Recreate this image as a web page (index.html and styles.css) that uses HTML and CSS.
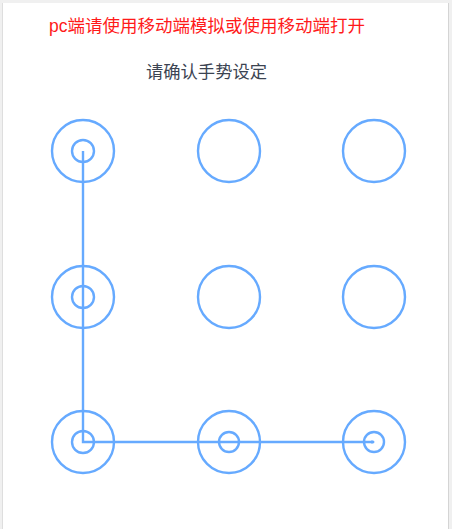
FILE: index.html
```html
<!DOCTYPE html>
<html lang="zh-CN">
<head>
<meta charset="utf-8">
<title>手势密码</title>
<link rel="stylesheet" href="styles.css">
</head>
<body>
<div class="panel">
  <div class="notice">pc端请使用移动端模拟或使用移动端打开</div>
  <div class="title">请确认手势设定</div>
  <svg class="lock" width="446" height="429" viewBox="0 0 446 429">
    <g fill="none" stroke="#66aaff" stroke-width="2.4">
      <circle cx="80" cy="51" r="31"/>
      <circle cx="226" cy="51" r="31"/>
      <circle cx="371" cy="51" r="31"/>
      <circle cx="80" cy="197" r="31"/>
      <circle cx="226" cy="197" r="31"/>
      <circle cx="371" cy="197" r="31"/>
      <circle cx="80" cy="342" r="31"/>
      <circle cx="226" cy="342" r="31"/>
      <circle cx="371" cy="342" r="31"/>
      <circle cx="80" cy="51" r="11"/>
      <circle cx="80" cy="197" r="11"/>
      <circle cx="80" cy="342" r="11"/>
      <circle cx="226" cy="342" r="10"/>
      <circle cx="371" cy="342" r="10"/>
    </g>
    <polyline points="80,51 80,342 371,342" fill="none" stroke="#66aaff" stroke-width="2.4"/>
    <path d="M368.5,340 L372,342 L368.5,344 Z" fill="#66aaff"/>
  </svg>
</div>
</body>
</html>
```

FILE: styles.css
```css
html, body {
  margin: 0;
  padding: 0;
  background: #f0f0f0;
}

body {
  font-family: "Liberation Sans", "Noto Sans CJK SC", sans-serif;
  overflow: hidden;
}

.panel {
  margin: 3px 3px 0 2px;
  min-height: 526px;
  background: #ffffff;
  border-left: 1px solid #dedede;
  border-right: 1px solid #d4d4d4;
}

.notice {
  color: #ff1a1a;
  font-size: 17.5px;
  line-height: 20px;
  padding: 13px 0 0 46px;
  white-space: nowrap;
}

.title {
  color: #3c4452;
  font-size: 17.3px;
  line-height: 20px;
  padding: 26px 0 0 143px;
}

.lock {
  display: block;
  margin-top: 18px;
}
```
